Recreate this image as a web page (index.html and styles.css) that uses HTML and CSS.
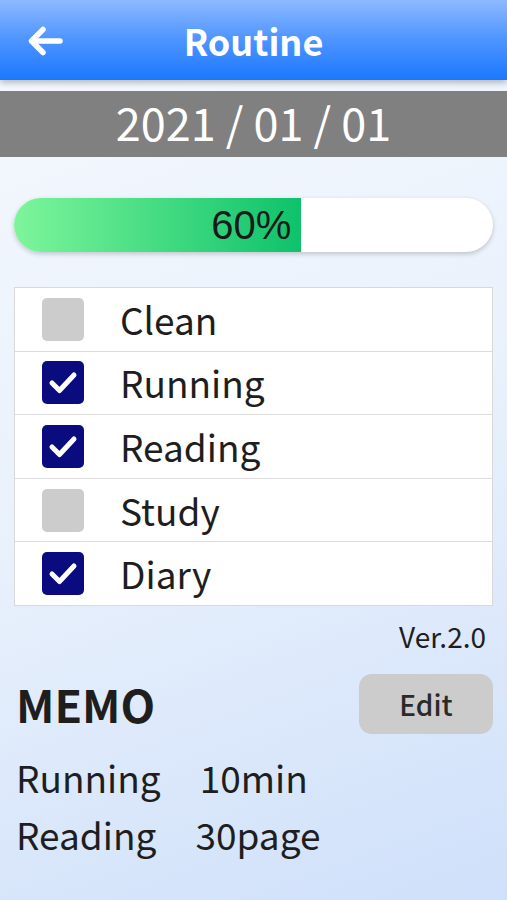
FILE: index.html
```html
<!DOCTYPE html>
<html lang="en">
<head>
<meta charset="UTF-8">
<title>Routine</title>
<link rel="stylesheet" href="styles.css">
</head>
<body>
    <header class="app-bar">
        <svg class="back" width="36" height="30" viewBox="0 0 36 30">
            <path d="M33 15 H5 M16 3.5 L4.5 15 L16 26.5" fill="none" stroke="#fff" stroke-width="5.5" stroke-linecap="round" stroke-linejoin="round"/>
        </svg>
        <h1 class="title">Routine</h1>
    </header>

    <div class="date-bar">2021 / 01 / 01</div>

    <main class="content">
        <div class="progress">
            <div class="progress-fill" style="width: 60%;"><span>60%</span></div>
        </div>

        <ul class="task-list">
            <li class="task"><span class="box"></span>Clean</li>
            <li class="task"><span class="box checked"></span>Running</li>
            <li class="task"><span class="box checked"></span>Reading</li>
            <li class="task"><span class="box"></span>Study</li>
            <li class="task"><span class="box checked"></span>Diary</li>
        </ul>

        <div class="version">Ver.2.0</div>

        <div class="memo-head">
            <h2 class="memo-title">MEMO</h2>
            <button class="edit-btn">Edit</button>
        </div>

        <div class="memo">
            <p><span class="memo-key">Running</span>10min</p>
            <p><span class="memo-key">Reading</span>30page</p>
        </div>
    </main>
</body>
</html>
```

FILE: styles.css
```css
html, body {
    margin: 0;
    padding: 0;
}
body {
    width: 507px;
    height: 900px;
    overflow: hidden;
    font-family: "Noto Sans CJK JP", "Noto Sans", sans-serif;
    color: #1e1e1e;
    background: linear-gradient(160deg, #f6f9fe 0%, #e9f1fc 50%, #cfe0fa 100%);
}
.app-bar {
    position: relative;
    height: 80px;
    display: flex;
    align-items: center;
    justify-content: center;
    background: linear-gradient(to bottom, #8dbaff 0%, #4d94ff 50%, #1b78ff 100%);
    box-shadow: 0 3px 6px rgba(0, 0, 0, 0.25);
    z-index: 2;
}
.back {
    position: absolute;
    left: 27px;
    top: 26px;
}
.title {
    margin: 0;
    color: #fff;
    font-size: 36px;
    font-weight: bold;
    line-height: 1;
}
.date-bar {
    margin-top: 11px;
    height: 66px;
    background: #808080;
    color: #fff;
    font-size: 45px;
    line-height: 62px;
    text-align: center;
}
.content {
    padding: 41px 14px 0 14px;
}
.progress {
    height: 54px;
    border-radius: 27px;
    background: #fff;
    overflow: hidden;
    box-shadow: 0 2px 5px rgba(0, 0, 0, 0.2);
}
.progress-fill {
    height: 100%;
    display: flex;
    align-items: center;
    justify-content: flex-end;
    background: linear-gradient(to right, #7ef59b, #0dc26b);
}
.progress-fill span {
    font-family: "Liberation Sans", Arial, sans-serif;
    font-size: 40px;
    color: #1a1a1a;
    padding-right: 10px;
}
.task-list {
    list-style: none;
    margin: 35px 0 0 0;
    padding: 0;
    background: #fff;
    border: 1px solid #d9d9d9;
    width: 477px;
}
.task {
    height: 62.6px;
    display: flex;
    align-items: center;
    font-size: 37px;
    line-height: 1;
    border-top: 1px solid #dcdcdc;
}
.task:first-child {
    border-top: none;
}
.box {
    width: 42px;
    height: 43px;
    margin: 0 36px 0 27px;
    border-radius: 5px;
    background: #cccccc;
    flex-shrink: 0;
}
.box.checked {
    background: #0b0b80 url("data:image/svg+xml,%3Csvg xmlns='http://www.w3.org/2000/svg' width='42' height='43' viewBox='0 0 42 43'%3E%3Cpath d='M10 22 L17.5 29.5 L32 14' fill='none' stroke='white' stroke-width='5' stroke-linecap='round' stroke-linejoin='round'/%3E%3C/svg%3E") no-repeat center;
}
.version {
    text-align: right;
    font-size: 28px;
    margin: 13px 7px 0 0;
    line-height: 34px;
}
.memo-head {
    display: flex;
    align-items: center;
    justify-content: space-between;
    margin-top: 21px;
    padding-left: 2px;
}
.memo-title {
    margin: 0;
    font-size: 45px;
    font-weight: bold;
    line-height: 1;
}
.edit-btn {
    width: 134px;
    height: 60px;
    border: none;
    border-radius: 13px;
    background: #cccccc;
    font-family: inherit;
    font-size: 28px;
    font-weight: 500;
    color: #2a2a2a;
}
.memo {
    margin-top: 15px;
    padding-left: 2px;
}
.memo p {
    margin: 0;
    font-size: 37px;
    line-height: 57px;
}
.memo-key {
    display: inline-block;
    margin-right: 39px;
}
```
